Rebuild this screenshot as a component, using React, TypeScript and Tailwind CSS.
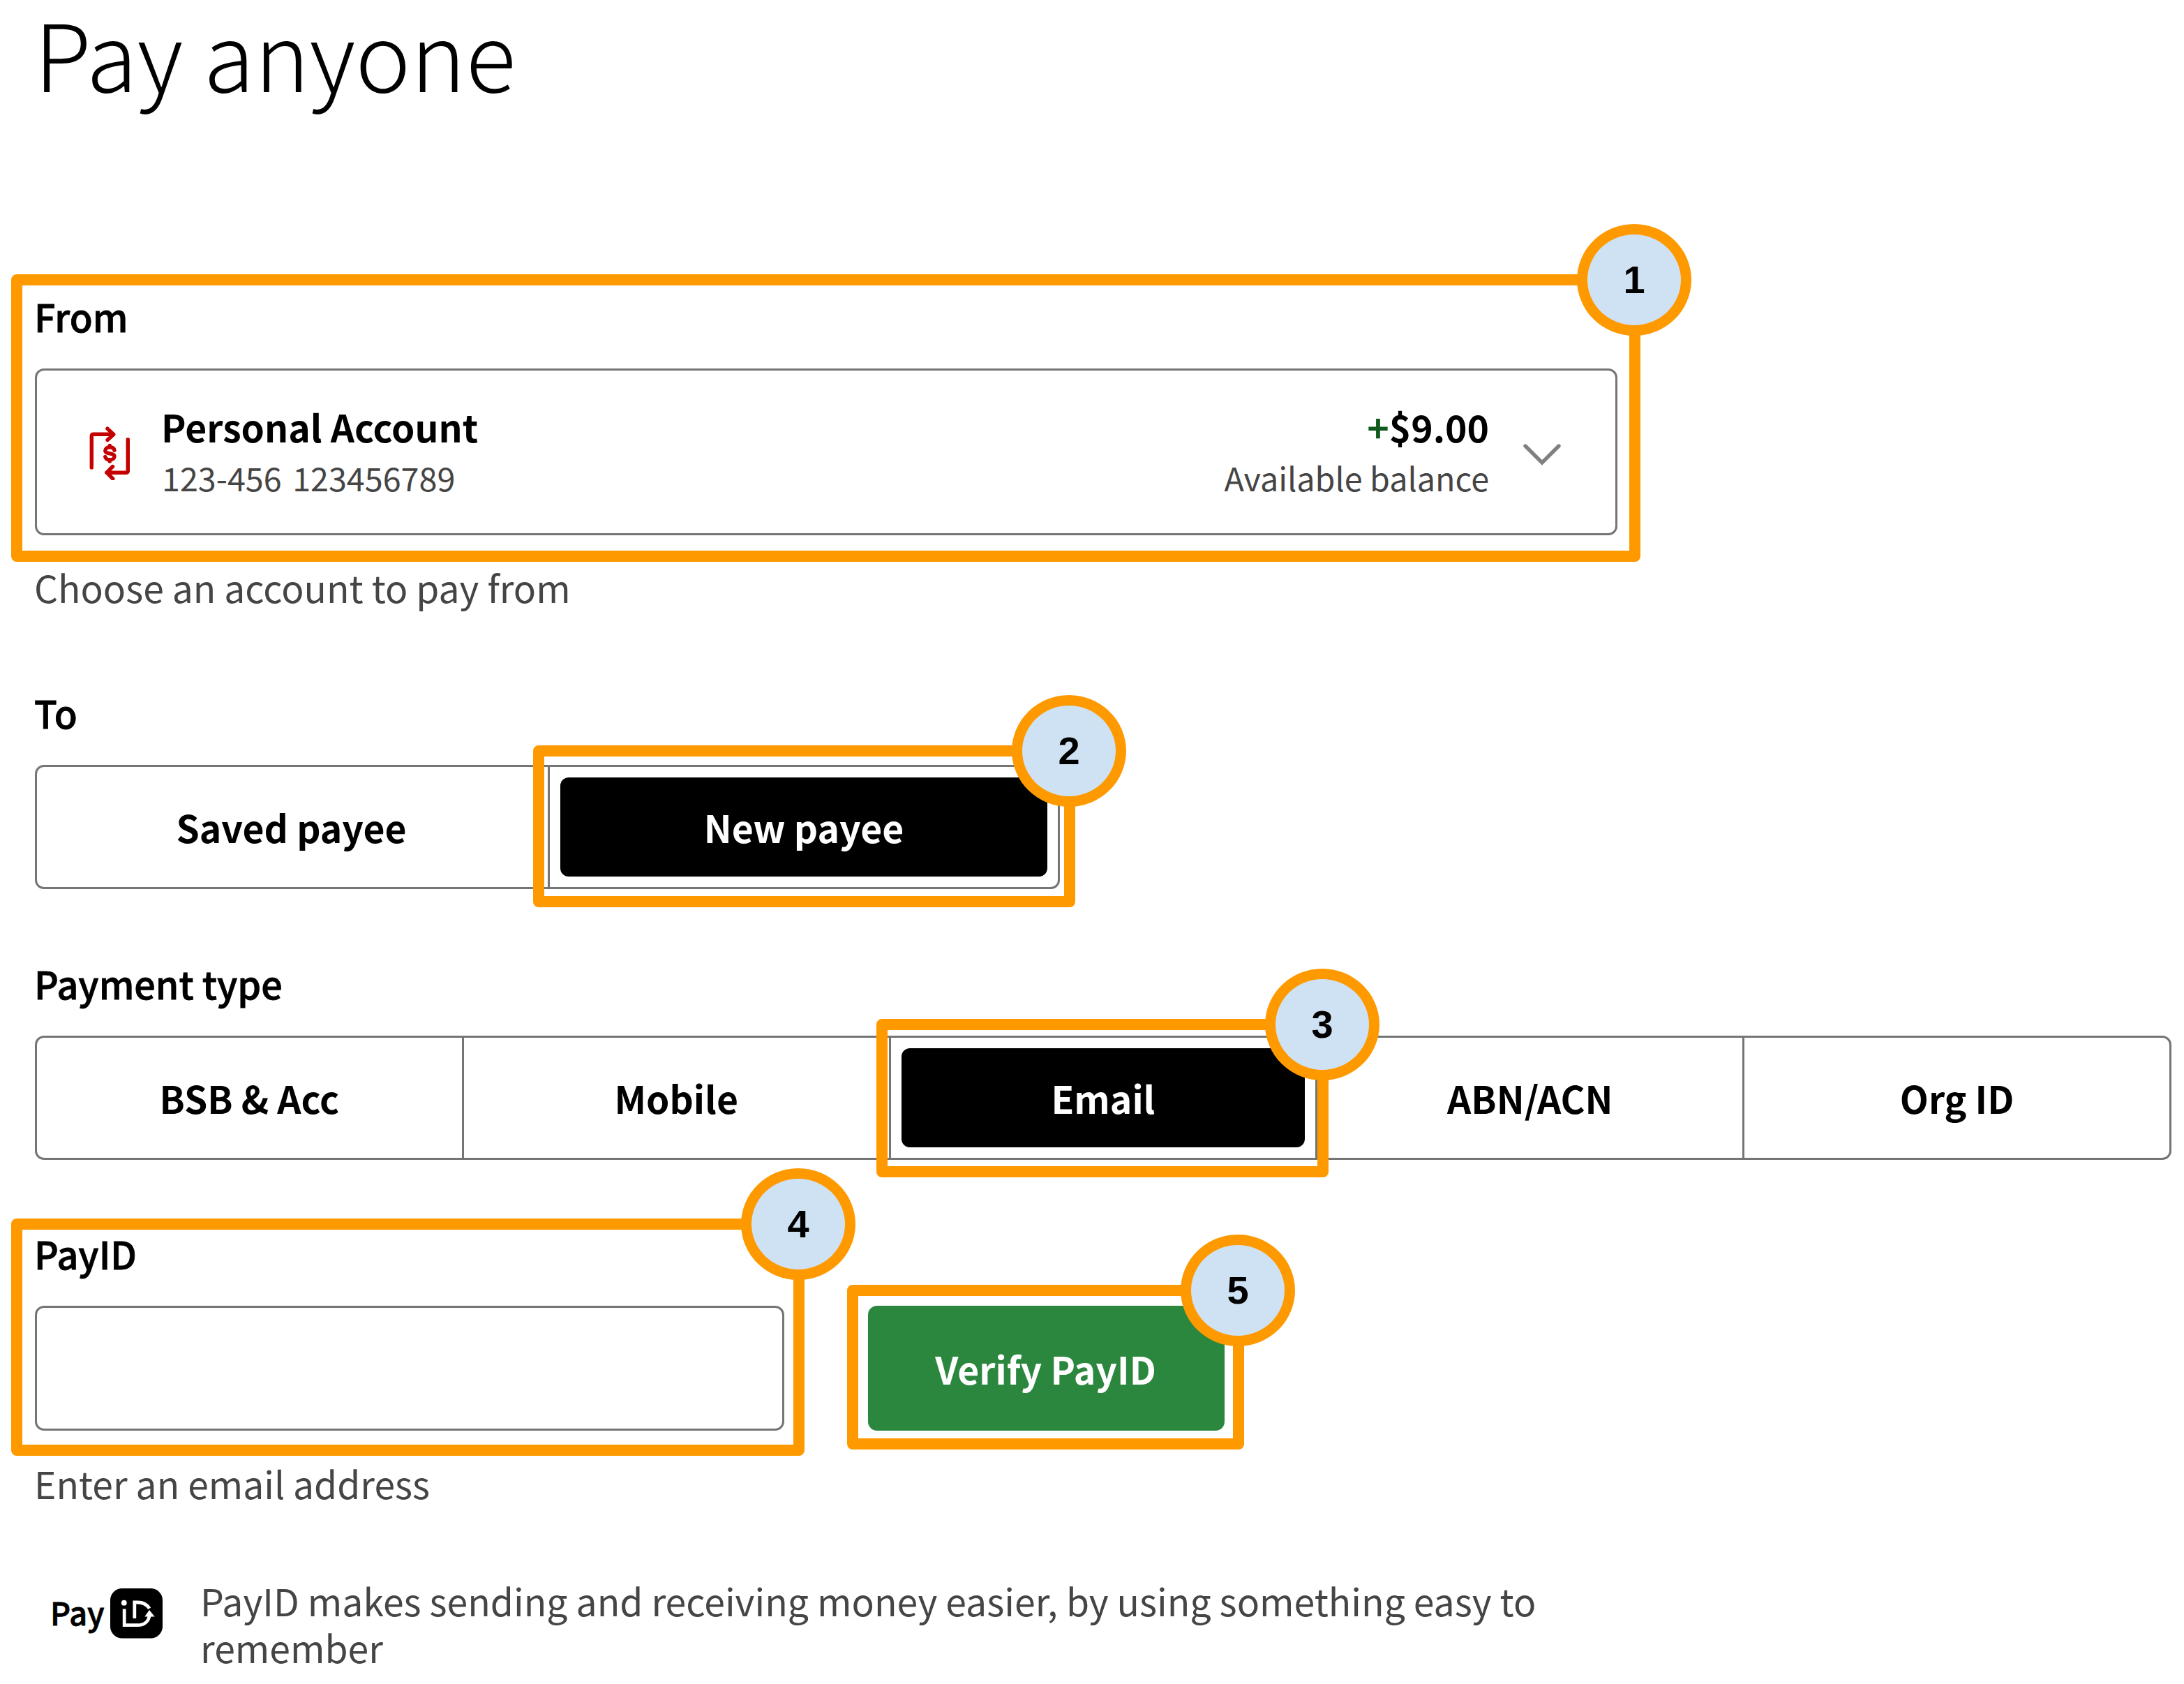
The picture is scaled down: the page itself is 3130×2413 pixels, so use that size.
import { useState } from "react"

const payeeOptions = ["Saved payee", "New payee"]
const paymentTypes = ["BSB & Acc", "Mobile", "Email", "ABN/ACN", "Org ID"]

const steps = [
  { step: 1, className: "left-[16px] top-[393px] w-[2335px] h-[412px]" },
  { step: 2, className: "left-[764px] top-[1068px] w-[777px] h-[232px]" },
  { step: 3, className: "left-[1256px] top-[1460px] w-[648px] h-[227px]" },
  { step: 4, className: "left-[16px] top-[1746px] w-[1137px] h-[340px]" },
  { step: 5, className: "left-[1214px] top-[1841px] w-[569px] h-[236px]" },
]

function TransferIcon() {
  return (
    <svg
      className="w-[60px] h-[80px] shrink-0"
      viewBox="0 0 60 80"
      fill="none"
      stroke="#c40000"
      strokeWidth="5.4"
      strokeLinecap="round"
      strokeLinejoin="round"
    >
      <path d="M3.3 62V16.2a2 2 0 0 1 2-2H34" />
      <path d="M26 6.2l8.8 8.2L26 22.5" />
      <path d="M55.3 21.8v45.4a2 2 0 0 1-2 2H25" />
      <path d="M33.5 60.5L25 69.2l8.8 8.8" />
      <path d="M36 37.2c-.8-3-3.4-4.4-6.6-4.4-3.8 0-6.6 1.9-6.6 4.7 0 6.2 13.2 2.6 13.2 8.7 0 2.8-2.9 4.7-6.6 4.7-3.2 0-5.8-1.4-6.6-4.3" />
      <path d="M29.3 30.5v2M29.3 51v2" />
    </svg>
  )
}

function ChevronDown() {
  return (
    <svg className="w-[60px] h-[32px] shrink-0 mt-[7px]" viewBox="0 0 60 32" fill="none" stroke="#808080" strokeWidth="5.4" strokeLinecap="round">
      <path d="M6 4l24 24L54 4" />
    </svg>
  )
}

function PayIdLogo() {
  return (
    <div className="flex items-center ml-[21px] mt-[16px] w-[162px] h-[72px] shrink-0">
      <span className="w-[86px] ml-px text-[45px] leading-[72px] font-medium text-black -mt-[5px] [-webkit-text-stroke:0.8px]">Pay</span>
      <svg className="w-[75px] h-[72px] shrink-0" viewBox="0 0 75 72" fill="none" stroke="#fff" strokeWidth="4.8">
        <rect width="75" height="71.5" rx="17" fill="#000" stroke="none" />
        <circle cx="19.8" cy="20.7" r="3.9" fill="#fff" stroke="none" />
        <path d="M20.2 29.5v23.2h19c9.500 0 16.300-5.500 17.300-15.500" />
        <path d="M34.8 43V20h4.400c7.500 0 13.300 2.800 17 8.800" />
        <path d="M49.3 40.5l6.700-9.500 7.700 9.500z" fill="#fff" stroke="none" />
      </svg>
    </div>
  )
}

type SegmentedProps = {
  options: string[]
  value: string
  onChange: (value: string) => void
  className: string
  itemClassName: string
}

function Segmented({ options, value, onChange, className, itemClassName }: SegmentedProps) {
  return (
    <div className={`flex h-[178px] ${className}`}>
      {options.map((option) => (
        <button
          key={option}
          type="button"
          onClick={() => onChange(option)}
          className={`border-[3px] border-[#757575] p-[15px] font-bold first:rounded-l-[13px] last:rounded-r-[13px] not-first:-ml-[3px] ${itemClassName}`}
        >
          <span
            className={`flex items-center justify-center w-full h-full rounded-[12px] ${
              option === value ? "bg-black text-white" : "text-black"
            }`}
          >
            {option}
          </span>
        </button>
      ))}
    </div>
  )
}

export default function App() {
  const [payee, setPayee] = useState("New payee")
  const [paymentType, setPaymentType] = useState("Email")
  const [payId, setPayId] = useState("")

  return (
    <div className="relative w-[3130px] h-[2413px] overflow-hidden bg-white pl-[50px] font-['Noto_Sans_CJK_SC',sans-serif] text-[53.4px] leading-[66px] text-[#454545]">
      <h1 className="-ml-px text-[133.5px] leading-[148px] font-light text-black">Pay anyone</h1>

      <form onSubmit={(e) => e.preventDefault()}>
        <div className="mt-[272px]">
          <p className="text-[53.8px] font-medium text-black -ml-px [-webkit-text-stroke:0.8px]">From</p>
          <button
            type="button"
            className="mt-[42px] flex items-center w-[2268px] h-[239px] rounded-[13px] border-[3px] border-[#757575] pl-[75px] pr-[75px] text-left"
          >
            <TransferIcon />
            <div className="ml-[43px] flex-1 pb-[3px]">
              <p className="font-bold text-black">Personal Account</p>
              <p className="mt-[9px] ml-px text-[46.7px] leading-[62px] [word-spacing:5px]">123-456 123456789</p>
            </div>
            <div className="mr-[46px] pb-[3px] text-right">
              <p className="font-bold text-black">
                <span className="text-[#0f5a1c]">+</span>$9.00
              </p>
              <p className="mt-[9px] text-[46.7px] leading-[62px]">Available balance</p>
            </div>
            <ChevronDown />
          </button>
          <p className="mt-[41px] -ml-px">Choose an account to pay from</p>
        </div>

        <div className="mt-[114px]">
          <p className="text-[53.8px] font-medium text-black -ml-px [-webkit-text-stroke:0.8px]">To</p>
          <Segmented
            options={payeeOptions}
            value={payee}
            onChange={setPayee}
            className="mt-[42px] w-[1469px]"
            itemClassName="w-[734px] first:w-[738px] first:pr-[18px]"
          />
        </div>

        <div className="mt-[102px]">
          <p className="text-[53.8px] font-medium text-black -ml-px [-webkit-text-stroke:0.8px]">Payment type</p>
          <Segmented
            options={paymentTypes}
            value={paymentType}
            onChange={setPaymentType}
            className="mt-[42px] w-[3062px]"
            itemClassName="flex-1"
          />
        </div>

        <div className="mt-[101px]">
          <label htmlFor="payid" className="block text-[53.8px] font-medium text-black -ml-px [-webkit-text-stroke:0.8px]">
            PayID
          </label>
          <div className="mt-[42px] flex gap-[120px]">
            <input
              id="payid"
              type="text"
              className="w-[1074px] h-[179px] rounded-[13px] border-[3px] border-[#757575] px-10 text-black focus:outline-none"
              value={payId}
              onChange={(e) => setPayId(e.target.value)}
            />
            <button type="submit" className="w-[511px] h-[179px] rounded-[13px] bg-[#2c873e] pr-[2px] font-bold text-white">
              Verify PayID
            </button>
          </div>
          <p className="mt-[42px] -ml-px">Enter an email address</p>
        </div>
      </form>

      <div className="mt-[102px] flex">
        <PayIdLogo />
        <p className="ml-[54px] w-[2030px] text-[53.5px] leading-[66.5px]">
          PayID makes sending and receiving money easier, by using something easy to remember
        </p>
      </div>

      {/* numbered step highlights */}
      {steps.map(({ step, className }) => (
        <div key={step} className={`absolute rounded-[8px] border-[16px] border-[#ff9900] pointer-events-none ${className}`}>
          <span className="absolute -right-[89px] -top-[88px] flex items-center justify-center w-[164px] h-[160px] rounded-[50%] border-[15px] border-[#ff9900] bg-[#cfe2f3] font-['Liberation_Sans',sans-serif] text-[56px] leading-none font-bold text-black">
            {step}
          </span>
        </div>
      ))}
    </div>
  )
}
